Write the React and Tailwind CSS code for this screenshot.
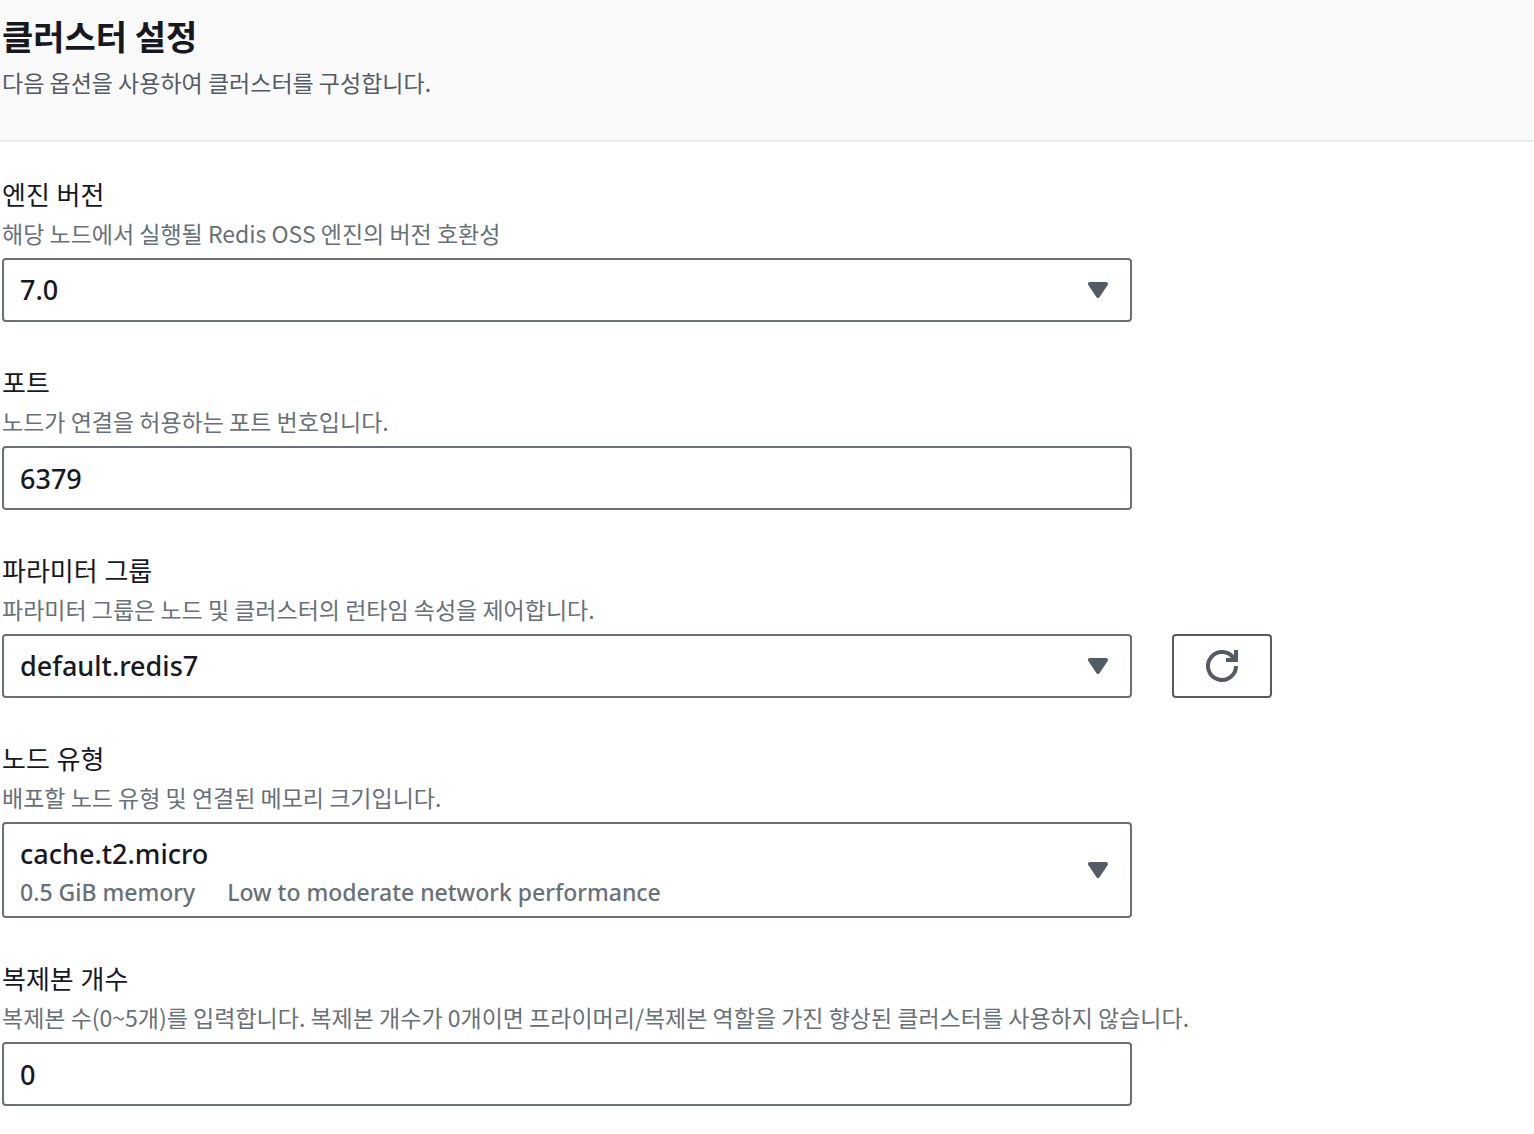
import { useId, useState } from "react";

function Caret() {
  return (
    <svg
      viewBox="0 0 20 16"
      className="pointer-events-none absolute top-1/2 right-6 h-4 w-5 -translate-y-1/2"
      aria-hidden="true"
    >
      <path
        d="M2 2h16L10 14z"
        fill="#545b64"
        stroke="#545b64"
        strokeWidth="4"
        strokeLinejoin="round"
      />
    </svg>
  );
}

function RefreshIcon() {
  return (
    <svg viewBox="0 0 32 32" className="h-8 w-8" fill="none" aria-hidden="true">
      <path
        d="M30 16a14 14 0 1 1-1.9-7"
        stroke="#545b64"
        strokeWidth="4"
      />
      <path d="M30 0v10H20" stroke="#545b64" strokeWidth="4" />
    </svg>
  );
}

function FormField({ label, description, action, children }) {
  const id = useId();
  return (
    <div>
      <label
        htmlFor={id}
        className="block font-['Noto_Sans','Noto_Sans_CJK_KR',sans-serif] text-[26px] leading-[34px] text-[#16191f]"
      >
        {label}
      </label>
      <p
        id={`${id}-desc`}
        className="text-[23px] leading-[42px] text-[#687078]"
      >
        {description}
      </p>
      <div className="mt-1 flex gap-10">
        <div className="relative w-full max-w-[1130px]">{children(id)}</div>
        {action}
      </div>
    </div>
  );
}

function TextInput({ id, value, onChange }) {
  return (
    <input
      id={id}
      type="text"
      inputMode="numeric"
      aria-describedby={`${id}-desc`}
      value={value}
      onChange={(e) => onChange(e.target.value)}
      className="block h-16 w-full rounded-sm border-2 border-[#687078] bg-white px-4 font-['Noto_Sans','Noto_Sans_CJK_KR',sans-serif] text-[27px] font-medium text-[#16191f] outline-none"
    />
  );
}

function Select({ id, value, onChange, options }) {
  return (
    <>
      <select
        id={id}
        aria-describedby={`${id}-desc`}
        value={value}
        onChange={(e) => onChange(e.target.value)}
        className="block h-16 w-full appearance-none rounded-sm border-2 border-[#687078] bg-white px-4 font-['Noto_Sans','Noto_Sans_CJK_KR',sans-serif] text-[27px] font-medium text-[#16191f] outline-none"
      >
        {options.map((option) => (
          <option key={option} value={option}>
            {option}
          </option>
        ))}
      </select>
      <Caret />
    </>
  );
}

const NODE_TYPES = [
  {
    name: "cache.t2.micro",
    tags: ["0.5 GiB memory", "Low to moderate network performance"],
  },
];

function NodeTypeSelect({ id, value, onChange }) {
  const selected = NODE_TYPES.find((n) => n.name === value) || NODE_TYPES[0];
  return (
    <>
      <select
        id={id}
        aria-describedby={`${id}-desc`}
        value={value}
        onChange={(e) => onChange(e.target.value)}
        className="block h-24 w-full appearance-none rounded-sm border-2 border-[#687078] bg-white px-4 pb-8 font-['Noto_Sans','Noto_Sans_CJK_KR',sans-serif] text-[27px] font-medium text-[#16191f] outline-none"
      >
        {NODE_TYPES.map((n) => (
          <option key={n.name} value={n.name}>
            {n.name}
          </option>
        ))}
      </select>
      {/* tags of the selected node, drawn over the lower half of the select */}
      <div className="pointer-events-none absolute bottom-2.5 left-[18px] flex gap-8 font-['Noto_Sans',sans-serif] text-[23px] leading-8 font-medium text-[#687078]">
        {selected.tags.map((tag) => (
          <span key={tag}>{tag}</span>
        ))}
      </div>
      <Caret />
    </>
  );
}

export default function App() {
  const [engineVersion, setEngineVersion] = useState("7.0");
  const [port, setPort] = useState("6379");
  const [parameterGroup, setParameterGroup] = useState("default.redis7");
  const [nodeType, setNodeType] = useState("cache.t2.micro");
  const [replicas, setReplicas] = useState("0");

  return (
    <main className="min-h-screen bg-white font-['Noto_Sans_CJK_KR',sans-serif]">
      <header className="border-b-2 border-[#eaeded] bg-[#fafafa] px-0.5 pt-4 pb-9">
        <h2 className="text-[34px] leading-10 font-bold text-[#16191f]">
          클러스터 설정
        </h2>
        <p className="pt-2 pb-1 text-[23px] leading-9 text-[#545b64]">
          다음 옵션을 사용하여 클러스터를 구성합니다.
        </p>
      </header>

      <form
        className="flex flex-col gap-11 px-0.5 pt-9 pb-7"
        onSubmit={(e) => e.preventDefault()}
      >
        <FormField
          label="엔진 버전"
          description="해당 노드에서 실행될 Redis OSS 엔진의 버전 호환성"
        >
          {(id) => (
            <Select
              id={id}
              value={engineVersion}
              onChange={setEngineVersion}
              options={["7.0"]}
            />
          )}
        </FormField>

        <FormField
          label="포트"
          description="노드가 연결을 허용하는 포트 번호입니다."
        >
          {(id) => <TextInput id={id} value={port} onChange={setPort} />}
        </FormField>

        <FormField
          label="파라미터 그룹"
          description="파라미터 그룹은 노드 및 클러스터의 런타임 속성을 제어합니다."
          action={
            <button
              type="button"
              aria-label="새로 고침"
              className="flex h-16 w-[100px] shrink-0 items-center justify-center rounded-sm border-2 border-[#545b64] bg-white"
            >
              <RefreshIcon />
            </button>
          }
        >
          {(id) => (
            <Select
              id={id}
              value={parameterGroup}
              onChange={setParameterGroup}
              options={["default.redis7"]}
            />
          )}
        </FormField>

        <FormField
          label="노드 유형"
          description="배포할 노드 유형 및 연결된 메모리 크기입니다."
        >
          {(id) => (
            <NodeTypeSelect id={id} value={nodeType} onChange={setNodeType} />
          )}
        </FormField>

        <FormField
          label="복제본 개수"
          description="복제본 수(0~5개)를 입력합니다. 복제본 개수가 0개이면 프라이머리/복제본 역할을 가진 향상된 클러스터를 사용하지 않습니다."
        >
          {(id) => (
            <TextInput id={id} value={replicas} onChange={setReplicas} />
          )}
        </FormField>
      </form>
    </main>
  );
}
